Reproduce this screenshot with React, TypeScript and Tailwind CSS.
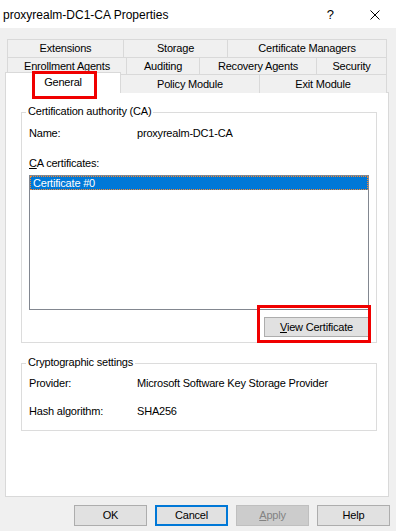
import React from "react";

const font = { fontFamily: '"Liberation Sans", Arial, sans-serif' };

function Tab({ w, children, last, noLeft }: { w: string; children: React.ReactNode; last?: boolean; noLeft?: boolean }) {
  return (
    <div
      className={`${w} h-full flex items-center justify-center border-t border-[#d9d9d9] bg-[#f0f0f0] ${noLeft ? "" : "border-l"} ${last ? "border-r" : ""}`}
    >
      {children}
    </div>
  );
}

function Group({ label, className, children }: { label: string; className: string; children: React.ReactNode }) {
  return (
    <div className={`relative border border-[#dcdcdc] ml-[15px] w-[356px] ${className}`}>
      <div className="absolute left-[4px] top-[-8px] bg-white px-[2px] h-[13px] leading-[13px]">{label}</div>
      {children}
    </div>
  );
}

function Btn({ children, cls }: { children: React.ReactNode; cls?: string }) {
  return (
    <div className={`w-[73px] h-[21px] flex items-center justify-center ${cls ?? "border border-[#adadad] bg-[#e1e1e1]"}`}>
      {children}
    </div>
  );
}

export default function App() {
  return (
    <div
      className="relative w-[396px] h-[531px] bg-[#f0f0f0] text-black text-[11px] tracking-[-0.2px] overflow-hidden flex flex-col"
      style={font}
    >
      {/* title bar */}
      <div className="h-[28px] bg-white flex items-center shrink-0">
        <div className="pl-[3px] text-[12px] tracking-normal leading-[14px] pt-[2px]">proxyrealm-DC1-CA Properties</div>
        <div className="ml-auto flex items-center">
          <span className="text-[13px] tracking-normal leading-[14px] pt-[2px] mr-[36px]">?</span>
          <svg width="10" height="10" viewBox="0 0 10 10" className="mr-[16px] mt-[2px]">
            <path d="M0.5 0.5 L9.5 9.5 M9.5 0.5 L0.5 9.5" stroke="#000" strokeWidth="1" />
          </svg>
        </div>
      </div>

      {/* tabs */}
      <div className="mt-[11px] ml-[7px] flex h-[18px]">
        <Tab w="w-[116px]">Extensions</Tab>
        <Tab w="w-[104px]">Storage</Tab>
        <Tab w="w-[160px]" last>Certificate Managers</Tab>
      </div>
      <div className="ml-[7px] flex h-[17px]">
        <Tab w="w-[119px]">Enrollment Agents</Tab>
        <Tab w="w-[73px]">Auditing</Tab>
        <Tab w="w-[117px]">Recovery Agents</Tab>
        <Tab w="w-[71px]" last>Security</Tab>
      </div>
      <div className="relative z-10 ml-[5px] flex items-end h-[19px] -mb-px">
        <div className="w-[116px] h-[21px] bg-white border-l border-t border-r border-[#d9d9d9] flex items-center justify-center pb-[2px]">
          General
        </div>
        <div className="w-[138px] h-[19px] self-start flex items-center justify-center border-t border-[#d9d9d9] bg-[#f0f0f0]">
          Policy Module
        </div>
        <div className="w-[128px] h-[19px] self-start flex items-center justify-center border-t border-l border-r border-[#d9d9d9] bg-[#f0f0f0]">
          Exit Module
        </div>
      </div>

      {/* panel */}
      <div className="ml-[5px] w-[384px] h-[405px] bg-white border border-[#d9d9d9] pt-[19px]">
        <Group label="Certification authority (CA)" className="h-[231px] pt-[14px] px-[7px]">
          <div className="flex h-[13px] leading-[13px]">
            <div className="w-[108px]">Name:</div>
            <div>proxyrealm-DC1-CA</div>
          </div>
          <div className="mt-[17px] h-[13px] leading-[13px]">
            <span className="underline underline-offset-[1px]">C</span>A certificates:
          </div>
          <div className="mt-[5px] h-[135px] border border-[#828790] bg-white">
            <div className="h-[14px] bg-[#0078d7] border border-dotted border-[#ff8728] text-white leading-[12px] pl-[2px]">
              Certificate #0
            </div>
          </div>
          <div className="mt-[7px] flex justify-end">
            <div className="w-[105px] h-[20px] border border-[#adadad] bg-[#e1e1e1] flex items-center justify-center">
              <span>
                <span className="underline underline-offset-[1px]">V</span>iew Certificate
              </span>
            </div>
          </div>
        </Group>

        <Group label="Cryptographic settings" className="mt-[20px] h-[68px] pt-[13px] px-[7px]">
          <div className="flex h-[13px] leading-[13px]">
            <div className="w-[108px]">Provider:</div>
            <div>Microsoft Software Key Storage Provider</div>
          </div>
          <div className="flex mt-[15px] h-[13px] leading-[13px]">
            <div className="w-[108px]">Hash algorithm:</div>
            <div>SHA256</div>
          </div>
        </Group>
      </div>

      {/* buttons */}
      <div className="mt-[8px] ml-[74px] flex gap-[8px]">
        <Btn>OK</Btn>
        <Btn cls="border-2 border-[#0078d7] bg-[#e1e1e1]">Cancel</Btn>
        <Btn cls="border border-[#bfbfbf] bg-[#cccccc] text-[#838383]">
          <span>
            <span className="underline underline-offset-[1px]">A</span>pply
          </span>
        </Btn>
        <Btn>Help</Btn>
      </div>

      {/* red annotation boxes */}
      <div className="absolute z-20 left-[32px] top-[71px] w-[65px] h-[28px] border-[3px] border-[#f00000] pointer-events-none" />
      <div className="absolute z-20 left-[257px] top-[305px] w-[114px] h-[38px] border-[3px] border-[#f00000] pointer-events-none" />
    </div>
  );
}
